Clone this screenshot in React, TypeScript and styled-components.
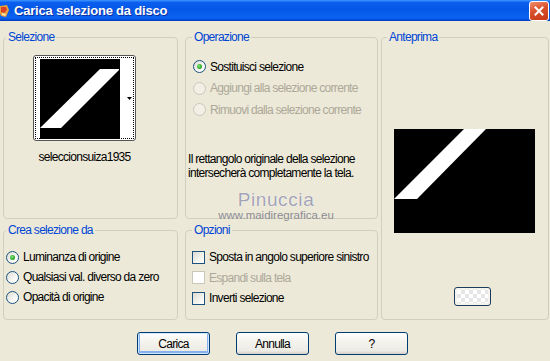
import { FC } from 'react';
import styled, { createGlobalStyle, css } from 'styled-components';

const GlobalStyle = createGlobalStyle`
  html, body {
    margin: 0;
    padding: 0;
    background: #ece9d8;
  }
  body {
    font-family: "Liberation Sans", Arial, sans-serif;
    font-size: 12px;
    letter-spacing: -0.7px;
    color: #000;
  }
`;

const Window = styled.div`
  position: relative;
  width: 550px;
  height: 361px;
  overflow: hidden;
  background: #ece9d8;
  display: flex;
  flex-direction: column;
`;

const TitleBar = styled.div`
  height: 21px;
  flex: none;
  display: flex;
  align-items: center;
  background: linear-gradient(
    180deg,
    #3d95ff 0%,
    #0a5ff0 12%,
    #0458e6 45%,
    #0b63f2 85%,
    #0449d4 95%,
    #0036b8 100%
  );
`;

const TitleText = styled.span`
  margin-left: 4px;
  color: #fff;
  font-weight: bold;
  font-size: 13px;
  letter-spacing: -0.2px;
  text-shadow: 1px 1px 0 #0b2fa0;
`;

const CloseButton = styled.div`
  margin-left: auto;
  margin-right: 1px;
  width: 18px;
  height: 18px;
  border: 1px solid #fff;
  border-radius: 3px;
  background: linear-gradient(160deg, #f08e6e 0%, #d9502c 45%, #c63a18 100%);
  display: flex;
  align-items: center;
  justify-content: center;
`;

const Body = styled.div`
  padding: 9px 0 0 3px;
  display: grid;
  grid-template-columns: 175px 7px 193px 3px 168px;
  grid-template-rows: 189px 97px;
  row-gap: 4px;
  grid-template-areas:
    'sel . op . prev'
    'crea . opt . prev';
`;

const Group = styled.fieldset<{ $area: string }>`
  grid-area: ${(p) => p.$area};
  margin: 0;
  padding: 0;
  min-width: 0;
  border: 1px solid #d0d0bf;
  border-radius: 4px;
  display: flex;
  flex-direction: column;
`;

const Legend = styled.legend<{ $offset: number }>`
  margin-left: ${(p) => p.$offset}px;
  padding: 0 2px;
  height: 14px;
  line-height: 14px;
  color: #0046d5;
`;

const ThumbColumn = styled.div`
  margin: 11px 0 0 29px;
  width: 103px;
  display: flex;
  flex-direction: column;
  align-items: center;
`;

const ThumbFrame = styled.div`
  box-sizing: border-box;
  width: 103px;
  height: 86px;
  border: 1px solid #555;
  border-radius: 3px;
  background: #fff;
  padding: 1px;
`;

const ThumbInner = styled.div`
  box-sizing: border-box;
  height: 100%;
  border: 1px dotted #000;
  display: flex;
  align-items: stretch;
  padding: 1px 0 1px 4px;
`;

const ThumbArrow = styled.div`
  width: 12px;
  display: flex;
  align-items: center;
  justify-content: flex-end;
  padding-right: 1px;
`;

const FileName = styled.div`
  margin-top: 9px;
  line-height: 14px;
  white-space: nowrap;
`;

const OptionList = styled.div<{ $top: number; $left: number; $row: number }>`
  padding: ${(p) => p.$top}px 0 0 ${(p) => p.$left}px;
  display: flex;
  flex-direction: column;
  > * {
    height: ${(p) => p.$row}px;
  }
`;

const Option = styled.label<{ $disabled?: boolean }>`
  display: flex;
  align-items: center;
  gap: 4px;
  white-space: nowrap;
  color: ${(p) => (p.$disabled ? '#aca899' : '#000')};
`;

const Radio = styled.span<{ $checked?: boolean; $disabled?: boolean }>`
  box-sizing: border-box;
  flex: none;
  width: 13px;
  height: 13px;
  border-radius: 50%;
  border: 1px solid ${(p) => (p.$disabled ? '#cac8bb' : '#1c5180')};
  background: ${(p) =>
    p.$disabled ? '#f2f0e6' : 'linear-gradient(135deg, #dcdcd4 0%, #fbfbf9 70%, #fff 100%)'};
  display: flex;
  align-items: center;
  justify-content: center;
  ${(p) =>
    p.$checked &&
    css`
      &::after {
        content: '';
        width: 5px;
        height: 5px;
        border-radius: 50%;
        background: radial-gradient(circle at 40% 40%, #8ee38a 0%, #31ad2a 55%, #1f8e1a 100%);
      }
    `}
`;

const Check = styled.span<{ $disabled?: boolean }>`
  box-sizing: border-box;
  flex: none;
  width: 13px;
  height: 13px;
  border: 1px solid ${(p) => (p.$disabled ? '#cac8bb' : '#1c5180')};
  background: ${(p) =>
    p.$disabled ? '#fff' : 'linear-gradient(135deg, #dcdcd4 0%, #f6f6f3 70%, #fff 100%)'};
`;

const Note = styled.p`
  margin: 31px 0 0 2px;
  line-height: 14px;
  white-space: nowrap;
`;

const PreviewBox = styled.div`
  margin: 85px 0 0 12px;
  width: 141px;
  height: 104px;
  background: #000;
`;

const SwatchButton = styled.div`
  box-sizing: border-box;
  margin: 54px 0 0 72px;
  width: 37px;
  height: 19px;
  border: 1px solid #1c3c5c;
  border-radius: 3px;
  padding: 2px;
  background: #f4f3ee;
`;

const Swatch = styled.div`
  height: 100%;
  background-color: #fff;
  background-image: linear-gradient(45deg, #e6e6e6 25%, transparent 25%, transparent 75%, #e6e6e6 75%),
    linear-gradient(45deg, #e6e6e6 25%, transparent 25%, transparent 75%, #e6e6e6 75%);
  background-size: 8px 8px;
  background-position: 0 0, 4px 4px;
`;

const ButtonRow = styled.div`
  margin-top: 12px;
  padding-left: 137px;
  display: flex;
  gap: 26px;
`;

const Button = styled.button<{ $default?: boolean }>`
  box-sizing: border-box;
  width: 73px;
  height: 23px;
  padding: 0;
  font: inherit;
  letter-spacing: inherit;
  color: #000;
  border: 1px solid #003c74;
  border-radius: 3px;
  background: linear-gradient(180deg, #ffffff 0%, #f4f3ee 40%, #ecebe4 85%, #d6d0c5 100%);
  ${(p) =>
    p.$default &&
    css`
      box-shadow: inset 0 0 0 1px #cee7ff, inset 0 -1px 0 2px #88b0f0;
    `}
`;

const Watermark = styled.div`
  position: absolute;
  left: 214px;
  top: 189px;
  width: 124px;
  display: flex;
  flex-direction: column;
  align-items: center;
  pointer-events: none;
  letter-spacing: 0;
`;

const WatermarkName = styled.span`
  font-size: 19px;
  line-height: 22px;
  letter-spacing: 0.6px;
  color: #a3a3b2;
  text-shadow: 0 0 1px #fff, 0 0 1px #fff;
`;

const WatermarkUrl = styled.span`
  margin-top: -2px;
  font-size: 11.5px;
  line-height: 13px;
  color: #8c8c94;
`;

const AppIcon: FC = () => (
  <svg width="12" height="14" viewBox="0 0 12 14" style={{ marginLeft: -2 }}>
    <path d="M2 2 L9 1 L11 6 L8 13 L3 12 L1 7 Z" fill="#e9a23b" />
    <path d="M3 3 L8 3 L9 6 L6 9 L3 8 Z" fill="#d8402a" />
    <path d="M4 9 L8 10 L7 12 L4 11 Z" fill="#f6e7b0" />
  </svg>
);

const App: FC = () => (
  <>
    <GlobalStyle />
    <Window>
      <TitleBar>
        <AppIcon />
        <TitleText>Carica selezione da disco</TitleText>
        <CloseButton>
          <svg width="10" height="10" viewBox="0 0 10 10">
            <path d="M1.5 1.5 L8.5 8.5 M8.5 1.5 L1.5 8.5" stroke="#fff" strokeWidth="2" strokeLinecap="square" />
          </svg>
        </CloseButton>
      </TitleBar>

      <Body>
        <Group $area="sel">
          <Legend $offset={2}>Selezione</Legend>
          <ThumbColumn>
            <ThumbFrame>
              <ThumbInner>
                <svg width="80" height="80" viewBox="0 0 80 80">
                  <rect width="80" height="80" fill="#000" />
                  <path d="M60 10 L79 10 L79 11 L21 69 L0 69 Z" fill="#fff" />
                </svg>
                <ThumbArrow>
                  <svg width="5" height="3" viewBox="0 0 5 3">
                    <path d="M0 0 H5 L2.5 3 Z" fill="#000" />
                  </svg>
                </ThumbArrow>
              </ThumbInner>
            </ThumbFrame>
            <FileName>seleccionsuiza1935</FileName>
          </ThumbColumn>
        </Group>

        <Group $area="op">
          <Legend $offset={6}>Operazione</Legend>
          <OptionList $top={12} $left={7} $row={21.5}>
            <Option>
              <Radio $checked />
              Sostituisci selezione
            </Option>
            <Option $disabled>
              <Radio $disabled />
              Aggiungi alla selezione corrente
            </Option>
            <Option $disabled>
              <Radio $disabled />
              Rimuovi dalla selezione corrente
            </Option>
          </OptionList>
          <Note>
            Il rettangolo originale della selezione
            <br />
            intersecherà completamente la tela.
          </Note>
        </Group>

        <Group $area="prev">
          <Legend $offset={5}>Anteprima</Legend>
          <PreviewBox>
            <svg width="141" height="104" viewBox="0 0 141 104">
              <path d="M70 0 L92 0 L23 70 L0 70 Z" fill="#fff" />
            </svg>
          </PreviewBox>
          <SwatchButton>
            <Swatch />
          </SwatchButton>
        </Group>

        <Group $area="crea">
          <Legend $offset={2}>Crea selezione da</Legend>
          <OptionList $top={10} $left={2} $row={20}>
            <Option>
              <Radio $checked />
              Luminanza di origine
            </Option>
            <Option>
              <Radio />
              Qualsiasi val. diverso da zero
            </Option>
            <Option>
              <Radio />
              Opacità di origine
            </Option>
          </OptionList>
        </Group>

        <Group $area="opt">
          <Legend $offset={6}>Opzioni</Legend>
          <OptionList $top={10} $left={6} $row={20.5}>
            <Option>
              <Check />
              Sposta in angolo superiore sinistro
            </Option>
            <Option $disabled>
              <Check $disabled />
              Espandi sulla tela
            </Option>
            <Option>
              <Check />
              Inverti selezione
            </Option>
          </OptionList>
        </Group>
      </Body>

      <ButtonRow>
        <Button $default>Carica</Button>
        <Button>Annulla</Button>
        <Button>?</Button>
      </ButtonRow>

      <Watermark>
        <WatermarkName>Pinuccia</WatermarkName>
        <WatermarkUrl>www.maidiregrafica.eu</WatermarkUrl>
      </Watermark>
    </Window>
  </>
);

export default App;
